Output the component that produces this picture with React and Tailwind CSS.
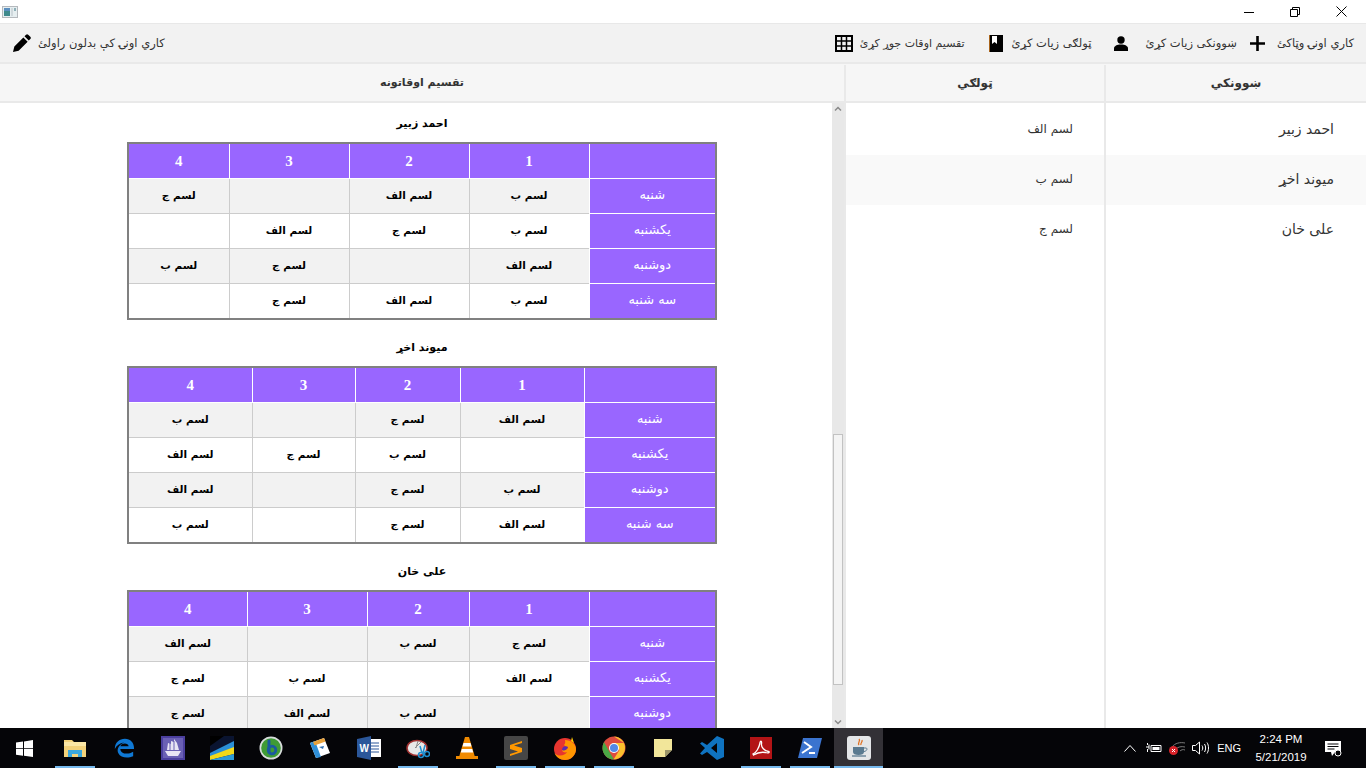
const ar = { fontFamily: '"DejaVu Sans", sans-serif' };

function cx(...a) { return a.filter(Boolean).join(' '); }

const tables = [
  {
    name: 'احمد زبیر',
    cols: ['w-[127px]', 'w-[120px]', 'w-[120px]', 'w-[120px]', 'w-[101px]'],
    rows: [
      ['شنبه', 'لسم ب', 'لسم الف', '', 'لسم ج'],
      ['یکشنبه', 'لسم ب', 'لسم ج', 'لسم الف', ''],
      ['دوشنبه', 'لسم الف', '', 'لسم ج', 'لسم ب'],
      ['سه شنبه', 'لسم ب', 'لسم الف', 'لسم ج', ''],
    ],
  },
  {
    name: 'میوند اخړ',
    cols: ['w-[132px]', 'w-[124px]', 'w-[105px]', 'w-[103px]', 'w-[124px]'],
    rows: [
      ['شنبه', 'لسم الف', 'لسم ج', '', 'لسم ب'],
      ['یکشنبه', '', 'لسم ب', 'لسم ج', 'لسم الف'],
      ['دوشنبه', 'لسم ب', 'لسم ج', '', 'لسم الف'],
      ['سه شنبه', 'لسم الف', 'لسم ج', '', 'لسم ب'],
    ],
  },
  {
    name: 'علی خان',
    cols: ['w-[127px]', 'w-[120px]', 'w-[102px]', 'w-[120px]', 'w-[119px]'],
    rows: [
      ['شنبه', 'لسم ج', 'لسم ب', '', 'لسم الف'],
      ['یکشنبه', 'لسم الف', '', 'لسم ب', 'لسم ج'],
      ['دوشنبه', '', 'لسم ب', 'لسم الف', 'لسم ج'],
    ],
  },
];

function Timetable({ t }) {
  return (
    <section className="mb-[10px] w-[590px]">
      <h3 className="flex h-9 items-center justify-center text-[11px] font-bold text-black" style={ar}>{t.name}</h3>
      <table dir="rtl" className="w-[590px] table-fixed border-collapse border-2 border-[#808080] bg-white">
        <colgroup>{t.cols.map((c, i) => <col key={i} className={c} />)}</colgroup>
        <thead>
          <tr className="h-[35px] bg-[#9966ff]">
            {['', '1', '2', '3', '4'].map((h, i) => (
              <th key={i} className="border border-white border-t-0 p-0 text-center font-['Liberation_Serif',serif] text-[15px] font-bold text-white">{h}</th>
            ))}
          </tr>
        </thead>
        <tbody>
          {t.rows.map((r, ri) => (
            <tr key={ri} className={cx(ri === 3 ? 'h-[36px]' : 'h-[35px]', ri % 2 === 0 ? 'bg-[#f2f2f2]' : 'bg-white')}>
              {r.map((c, ci) => ci === 0 ? (
                <td key={ci} className="border border-white bg-[#9966ff] p-0 pb-[2px] text-center text-[13px] text-white" style={ar}>{c}</td>
              ) : (
                <td key={ci} className="border border-[#cccccc] p-0 pt-[1px] text-center text-[10.5px] font-bold text-black" style={ar}>{c}</td>
              ))}
            </tr>
          ))}
        </tbody>
      </table>
    </section>
  );
}

function ToolItem({ label, children, className }) {
  return (
    <button className={cx('flex items-center text-[#333333]', className)} style={ar}>
      <span className="pt-[2px]">{label}</span>
      {children}
    </button>
  );
}

const TB = ({ children, active, current }) => (
  <div className={cx('relative flex h-10 w-[49px] items-center justify-center', current && 'bg-[#333136]')}>
    {children}
    {active && <span className={cx('absolute bottom-0 h-[2px] bg-[#76b9ed]', current ? 'inset-x-0' : 'left-[5px] w-10')} />}
  </div>
);

function App() {
  return (
    <div className="flex h-screen w-[1366px] flex-col overflow-hidden bg-white">
      {/* title bar */}
      <div className="flex h-6 shrink-0 items-center justify-between border-b border-[#e8e8e8] bg-white">
        <svg width="16" height="16" viewBox="0 0 16 16" className="ml-[2px]">
          <rect x="0.5" y="2.5" width="15" height="11" fill="#e6eef0" stroke="#b5b9bd" />
          <rect x="2" y="4" width="6" height="8" fill="#3f8a8c" />
          <rect x="2" y="4" width="6" height="3" fill="#5a8fc0" />
          <rect x="9" y="4" width="2" height="8" fill="#cfd8dc" />
          <rect x="12" y="4" width="2" height="3" fill="#8fb0b8" />
        </svg>
        <div className="mr-[2px] flex items-center">
          <div className="flex h-6 w-[46px] items-center justify-center">
            <svg width="10" height="10" viewBox="0 0 10 10"><path d="M0 5.500h10" stroke="#000" /></svg>
          </div>
          <div className="flex h-6 w-[46px] items-center justify-center">
            <svg width="10" height="10" viewBox="0 0 10 10" fill="none" stroke="#000"><path d="M.5 2.500h7v7h-7zM2.500 2.500v-2h7v7h-2" /></svg>
          </div>
          <div className="flex h-6 w-[46px] items-center justify-center">
            <svg width="11" height="11" viewBox="0 0 11 11" stroke="#000" strokeWidth="1"><path d="M.5.5l10 10M10.500.5l-10 10" /></svg>
          </div>
        </div>
      </div>

      {/* toolbar */}
      <div dir="rtl" className="box-content flex h-[38px] shrink-0 items-center justify-between border-b-2 border-[#e9e9e9] bg-[#f2f2f2] pl-[13px] pr-3">
        <div className="flex items-center">
          <ToolItem label="کاري اونۍ وټاکئ" className="ml-[13px] gap-[12px] text-[11.5px]">
            <svg width="15" height="15" viewBox="0 0 15 15"><path d="M6.200 0h2.600v6.200H15v2.600H8.800V15H6.200V8.800H0V6.200h6.200z" fill="#000" /></svg>
          </ToolItem>
          <ToolItem label="ښوونکی زیات کړئ" className="ml-[23px] gap-[17px] text-[11.5px]">
            <svg width="14" height="15" viewBox="0 0 14 15" fill="#000"><circle cx="7" cy="4" r="3.700" /><path d="M0 15v-2.500C0 10 3 8.500 7 8.500s7 1.500 7 4V15z" /></svg>
          </ToolItem>
          <ToolItem label="ټولګی زیات کړئ" className="ml-[24px] gap-[9px] text-[11.5px]">
            <svg width="14" height="17" viewBox="0 0 14 17"><path d="M0 0h14v17H0z" fill="#000" /><path d="M3 1h5v8L5.500 7 3 9z" fill="#fff" /><path d="M0 0h1v17H0z" fill="#a8641c" /></svg>
          </ToolItem>
          <ToolItem label="تقسیم اوقات جوړ کړئ" className="gap-[7px] text-[11px]">
            <svg width="18" height="17" viewBox="0 0 18 17" fill="none" stroke="#000"><path d="M1 1h16v15H1z" strokeWidth="2" /><path d="M6.500 1v15M11.500 1v15M1 6h16M1 11h16" strokeWidth="1.500" /></svg>
          </ToolItem>
        </div>
        <ToolItem label="کاري اونۍ کې بدلون راولئ" className="gap-[7px] text-[11.5px]">
          <svg width="18" height="18" viewBox="0 0 24 24" fill="#000"><path d="M0 24l1.800-7.500L13.800 4.500l5.700 5.700L7.500 22.200zM15.300 3l2.100-2.100a2 2 0 012.800 0l2.900 2.900a2 2 0 010 2.800L21 8.700z" /></svg>
        </ToolItem>
      </div>

      {/* headers */}
      <div dir="rtl" className="flex h-[39px] shrink-0 border-b-2 border-[#e9e9e9] bg-[#f6f6f6] pt-[1px] text-[12px] font-bold text-[#333333]" style={ar}>
        <div className="flex w-[262px] items-center justify-center border-l-2 border-[#e9e9e9]">ښوونکي</div>
        <div className="flex w-[260px] items-center justify-center border-l-2 border-[#e9e9e9]">ټولګي</div>
        <div className="flex flex-1 items-center justify-center text-[11px]">تقسیم اوقاتونه</div>
      </div>

      {/* body */}
      <div dir="rtl" className="flex min-h-0 flex-1">
        <div className="w-[262px] border-l-2 border-[#e9e9e9] text-[14px] text-[#333333]" style={ar}>
          <div className="flex h-[52px] items-center pr-[32px]">احمد زبیر</div>
          <div className="flex h-[50px] items-center bg-[#f9f9f9] pb-[2px] pr-[32px]">میوند اخړ</div>
          <div className="flex h-[50px] items-center pb-[2px] pr-[32px]">علی خان</div>
        </div>
        <div className="w-[260px] border-l-2 border-[#e9e9e9] text-[12px] text-[#333333]" style={ar}>
          <div className="flex h-[52px] items-center pr-[31px]">لسم الف</div>
          <div className="flex h-[50px] items-center bg-[#f9f9f9] pb-[2px] pr-[31px]">لسم ب</div>
          <div className="flex h-[50px] items-center pb-[2px] pr-[31px]">لسم ج</div>
        </div>
        <div className="flex w-[12px] shrink-0 flex-col items-center bg-[#e8e8e8]">
          <svg width="12" height="12" viewBox="0 0 12 12" fill="none" stroke="#8a8a8a" strokeWidth="1.500"><path d="M3 7.500l3-3 3 3" /></svg>
          <div className="mt-[319px] h-[251px] w-[10px] border border-[#c2c2c2] bg-[#f4f4f4]" />
          <div className="flex-1" />
          <svg width="12" height="12" viewBox="0 0 12 12" fill="none" stroke="#8a8a8a" strokeWidth="1.500"><path d="M3 4.500l3 3 3-3" /></svg>
        </div>
        <div dir="ltr" className="min-w-0 flex-1 overflow-hidden pl-[127px] pt-[3px]">
          {tables.map((t) => <Timetable key={t.name} t={t} />)}
        </div>
      </div>

      {/* taskbar */}
      <div className="flex h-10 shrink-0 items-center bg-[#050508]">
        <div className="flex h-10 w-[50px] items-center justify-center pr-[2px]">
          <svg width="17" height="17" viewBox="0 0 17 17" fill="#fff"><path d="M0 2.500l7-1v6.700H0zM8 1.400l9-1.400v8.200H8zM0 9h7v6.700l-7-1zM8 9h9v8l-9-1.300z" /></svg>
        </div>
        <TB active>
          <svg width="22" height="20" viewBox="0 0 22 20"><path d="M0 2h8l2 2h12v15H0z" fill="#f3d27a" /><path d="M0 4h22v4H0z" fill="#fbe7a5" /><path d="M4 19v-7h14v7h-4v-3H8v3z" fill="#3aa7dc" /></svg>
        </TB>
        <TB>
          <svg width="22" height="22" viewBox="0 0 24 24"><path d="M2 13C2 6 7 2 13 2c6 0 10 4 10 11H8c0 5 8 7 14 3v5c-7 3-14 1-16-3C4 15 5 9 12 6 7 7 4 9 2 13zM8 10h9c0-4-8-4-9 0z" fill="#0f78d4" /></svg>
        </TB>
        <TB>
          <svg width="24" height="24" viewBox="0 0 24 24"><rect width="24" height="24" fill="#4b3f9e" /><rect x="2" y="2" width="20" height="20" fill="#6a60b4" /><path d="M6 14l1-7 3 1V5l3 1V3l3 4 2 7zM4 15h16l-3 5H7z" fill="#e8e4f4" /><path d="M9 6v8M13 5v9" stroke="#6a60b4" /></svg>
        </TB>
        <TB>
          <svg width="24" height="24" viewBox="0 0 24 24"><rect width="24" height="24" fill="#0a1430" /><path d="M0 0h14L0 10z" fill="#000" /><path d="M0 17L24 5v7L0 21z" fill="#2a8fd6" /><path d="M0 20l24-9v7L0 24z" fill="#f2d91a" /><path d="M0 24l24-6v6z" fill="#2d9bd8" /></svg>
        </TB>
        <TB>
          <svg width="24" height="24" viewBox="0 0 24 24"><circle cx="12" cy="12" r="11.500" fill="#d8dcdc" /><circle cx="12" cy="12" r="9.800" fill="#3f9b35" /><path d="M10 5v11" stroke="#1a5aa0" strokeWidth="3" strokeLinecap="round" /><circle cx="13" cy="14" r="3.800" fill="none" stroke="#1a5aa0" strokeWidth="2.800" /></svg>
        </TB>
        <TB>
          <svg width="24" height="24" viewBox="0 0 24 24"><path d="M2 7l14-5 6 15-14 5z" fill="#fff" /><path d="M2 7l5-2 6 16-5 1z" fill="#2f8fd8" /><path d="M5 6l11-4 1.500 3.500L6.500 9.500z" fill="#e8a13a" /><path d="M11 11l5-1-1 3z" fill="#2f6fb0" /></svg>
        </TB>
        <TB>
          <svg width="24" height="24" viewBox="0 0 24 24"><rect x="9" y="3" width="15" height="18" fill="#fff" /><path d="M13 7h9M13 10h9M13 13h9M13 16h9" stroke="#2b579a" /><path d="M0 3l14-3v24L0 21z" fill="#2b579a" /><text x="2.500" y="16" fill="#fff" fontSize="10" fontWeight="700" fontFamily="Liberation Sans">W</text></svg>
        </TB>
        <TB active>
          <svg width="24" height="24" viewBox="0 0 24 24"><ellipse cx="11" cy="12" rx="10" ry="7.500" fill="#e8e8e8" stroke="#a03030" strokeWidth="1.500" /><path d="M12 5l-2 7M15 6l-6 6" stroke="#888" /><circle cx="15" cy="19" r="2.500" fill="none" stroke="#1f8fd0" strokeWidth="1.500" /><circle cx="21" cy="18" r="2.500" fill="none" stroke="#1f8fd0" strokeWidth="1.500" /><path d="M14 10l2 7M19 9l-2 8" stroke="#1f8fd0" strokeWidth="1.500" /></svg>
        </TB>
        <TB>
          <svg width="24" height="24" viewBox="0 0 24 24"><path d="M10 1h4l6 20H4z" fill="#f08a00" /><path d="M8.500 7h7l1 3.500h-9zM6.800 13h10.400l1 3.500H5.800z" fill="#fff" /><path d="M1 20h22v3H1z" fill="#f08a00" /></svg>
        </TB>
        <TB active>
          <svg width="24" height="24" viewBox="0 0 24 24"><rect width="24" height="24" rx="2" fill="#464646" /><path d="M18 5L6 9v4l8 2.500L6 18v2l12-4v-4L10 9.500 18 7z" fill="#ff9800" /></svg>
        </TB>
        <TB active>
          <svg width="24" height="24" viewBox="0 0 24 24"><circle cx="12" cy="13" r="11" fill="#e7352f" /><path d="M23 13a11 11 0 01-11 11C7 24 3 21 1.500 17 5 21 12 20 14 16c-2 1-5 0-5-2 3 1 6-1 6-3-2 0-3-1-4-2 2-2 1-4 1-5 6 0 11 4 11 9z" fill="#ff9500" /><path d="M19 1l2 6-3-2z" fill="#ffcb00" /><path d="M9 14c0-3 3-5 6-3-1 3-4 4-6 3z" fill="#5a2fb0" /></svg>
        </TB>
        <TB active>
          <svg width="24" height="24" viewBox="0 0 24 24"><circle cx="12" cy="12" r="11.500" fill="#dd4b3e" /><path d="M12 .5A11.500 11.500 0 0123 12c0 6-5 11.500-11.500 11.500L17.500 14 12 7h10" fill="#fbc02d" /><path d="M2 6l5.500 10 4.500 7.500C5 23.500.5 18 .5 12 .5 10 1 8 2 6z" fill="#4aa945" /><circle cx="12" cy="12" r="5" fill="#fff" /><circle cx="12" cy="12" r="4" fill="#5288e8" /></svg>
        </TB>
        <TB>
          <svg width="20" height="20" viewBox="0 0 20 20"><path d="M1 1h18v11l-7 7H1z" fill="#f2e69a" /><path d="M12 19v-7h7z" fill="#9a9468" /></svg>
        </TB>
        <TB>
          <svg width="24" height="24" viewBox="0 0 24 24" fill="#0f73c0"><path d="M17 0l7 3v18l-7 3-10-8-5 3-2-1.500L5 12 0 7.500 2 6l5 3zM17 7l-6 5 6 5z" /></svg>
        </TB>
        <TB active>
          <svg width="22" height="22" viewBox="0 0 22 22"><rect width="22" height="22" fill="#b31416" /><path d="M3 17c3-1 6-6 7-11 .5-3 2-2 1.500 1-.5 3 3 7 7 7.500 2 .5 0 2-3 1-3-.5-8 0-12 2.500z" fill="none" stroke="#fff" strokeWidth="1.300" /></svg>
        </TB>
        <TB active>
          <svg width="24" height="22" viewBox="0 0 24 22"><path d="M5 1h19l-5 20H0z" fill="#3b74cf" /><path d="M6 5l7 5-9 6" fill="none" stroke="#fff" strokeWidth="2" /><path d="M11 16h6" stroke="#fff" strokeWidth="2" /></svg>
        </TB>
        <TB active current>
          <svg width="24" height="24" viewBox="0 0 24 24"><rect width="24" height="24" rx="3" fill="#e4e6e8" /><path d="M12 3c2 2-2 4 0 6M15 4c1 2-2 3-1 5" stroke="#e07020" fill="none" strokeWidth="1.300" /><path d="M6 11h11v5c0 2-2 3-5.500 3S6 18 6 16z" fill="#5a7a90" /><path d="M5 20h14" stroke="#5a7a90" strokeWidth="1.300" /><path d="M17 12h2c1.500 0 1.500 3-2 3.500" stroke="#5a7a90" fill="none" /></svg>
        </TB>

        <div className="ml-auto flex h-10 items-center text-white">
          <svg width="12" height="7" viewBox="0 0 12 7" fill="none" stroke="#fff" className="mr-[10px]"><path d="M.5 6.500l5.500-6 5.500 6" /></svg>
          <svg width="16" height="12" viewBox="0 0 16 12" fill="none" stroke="#fff" className="mr-[7px]"><path d="M5 3.500h10v6H5z" /><path d="M6.500 5h7v3h-7z" fill="#fff" stroke="none" /><path d="M0 5h3M3 2.500v5M1.500 1v2M1.500 7v3" /></svg>
          <svg width="16" height="14" viewBox="0 0 16 14" className="mr-[7px]"><path d="M3 6C6 2 11 1 16 2M7 8c2-2 5-3 9-2M11 10c1-1 3-2 5-1" fill="none" stroke="#7a7a7a" /><circle cx="4.500" cy="9.500" r="4.500" fill="#d8232a" /><path d="M3 8l3 3M6 8l-3 3" stroke="#fff" /></svg>
          <svg width="17" height="14" viewBox="0 0 17 14" fill="none" stroke="#fff" className="mr-[8px]"><path d="M.5 4.500h3l4-3.500v12l-4-3.500h-3z" /><path d="M10 4.500c1 1.500 1 3.500 0 5M12.500 3c1.500 2.500 1.500 5.500 0 8M15 1.500c2 3 2 8 0 11" /></svg>
          <span className="mr-[13px] font-['Liberation_Sans',sans-serif] text-[11px]">ENG</span>
          <div className="mr-[16px] flex w-[54px] flex-col items-center font-['Liberation_Sans',sans-serif] text-[11.5px] leading-[18px]">
            <span>2:24 PM</span>
            <span>5/21/2019</span>
          </div>
          <svg width="18" height="17" viewBox="0 0 18 17" className="mr-[24px]"><path d="M1 1h16v11h-6l-3 4-1-4H1z" fill="#fff" /><path d="M3.500 4h11M3.500 6.500h11M3.500 9h7" stroke="#050508" /><circle cx="14" cy="13" r="3" fill="#050508" stroke="#fff" /></svg>
        </div>
      </div>
    </div>
  );
}

export default App;
